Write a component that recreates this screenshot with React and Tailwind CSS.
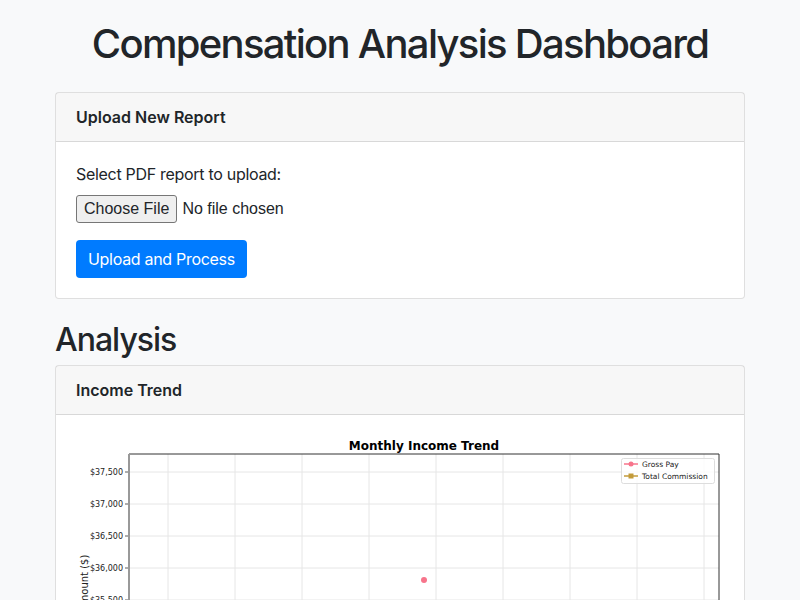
export default function App() {
  const yTicks = [
    { y: 37, label: "$37,500" },
    { y: 69, label: "$37,000" },
    { y: 101, label: "$36,500" },
    { y: 133, label: "$36,000" },
    { y: 165, label: "$35,500" },
    { y: 197, label: "$35,000" },
    { y: 229, label: "$34,500" },
    { y: 261, label: "$34,000" },
  ];
  const xGrid = [92, 159, 226, 293, 360, 427, 494, 561, 628];
  return (
    <div className="min-h-[600px] bg-[#f8f9fa] text-[#212529]" style={{ fontFamily: "Inter, 'Liberation Sans', sans-serif" }}>
      <div className="mx-auto w-[720px] px-[15px]">
        <h1 className="pt-5 mb-6 text-center text-[40px] leading-[48px] font-medium tracking-[-1.7px]">Compensation Analysis Dashboard</h1>

        <div className="bg-white border border-[rgba(0,0,0,0.125)] rounded-[4px] mb-6">
          <div className="bg-[rgba(0,0,0,0.03)] border-b border-[rgba(0,0,0,0.125)] px-5 py-3">
            <h5 className="text-[16px] leading-6 font-semibold">Upload New Report</h5>
          </div>
          <div className="p-5">
            <div className="text-[16px] leading-6 mb-2 tracking-[-0.3px]">Select PDF report to upload:</div>
            <div className="flex items-center h-[30px] mb-4">
              <span className="h-[28px] flex items-center px-[7px] bg-[#efefef] border border-[#767676] rounded-[3px] text-[16px]" style={{ fontFamily: "'Liberation Sans', Arial, sans-serif" }}>Choose File</span>
              <span className="ml-[5px] text-[16px]" style={{ fontFamily: "'Liberation Sans', Arial, sans-serif" }}>No file chosen</span>
            </div>
            <button className="bg-[#007bff] text-white text-[16px] leading-6 px-3 py-[7px] rounded-[4px] tracking-[-0.3px]">Upload and Process</button>
          </div>
        </div>

        <h2 className="text-[32px] leading-[38px] font-medium tracking-[-1px] -mt-[2px] mb-[6px]">Analysis</h2>

        <div className="bg-white border border-[rgba(0,0,0,0.125)] rounded-[4px]">
          <div className="bg-[rgba(0,0,0,0.03)] border-b border-[rgba(0,0,0,0.125)] px-5 py-3">
            <h5 className="text-[16px] leading-6 font-semibold">Income Trend</h5>
          </div>
          <div className="p-5">
            <svg width="650" height="310" viewBox="0 0 650 310" style={{ fontFamily: "'DejaVu Sans', sans-serif" }}>
              <text x="348" y="15" textAnchor="middle" fontSize="12" fontWeight="bold" fill="#000">Monthly Income Trend</text>
              {xGrid.map((x) => (
                <line key={x} x1={x} y1="19" x2={x} y2="272" stroke="#e6e6e6" strokeWidth="1" />
              ))}
              {yTicks.map((t) => (
                <g key={t.y}>
                  <line x1="53" y1={t.y} x2="643" y2={t.y} stroke="#e6e6e6" strokeWidth="1" />
                  <line x1="49" y1={t.y} x2="53" y2={t.y} stroke="#333" strokeWidth="0.8" />
                  <text x="47" y={t.y + 3} textAnchor="end" fontSize="8" fill="#222">{t.label}</text>
                </g>
              ))}
              <line x1="53" y1="19" x2="643" y2="19" stroke="#333" strokeWidth="1" />
              <line x1="643" y1="19" x2="643" y2="272" stroke="#333" strokeWidth="1" />
              <line x1="53" y1="272" x2="643" y2="272" stroke="#333" strokeWidth="1" />
              <line x1="53" y1="19" x2="53" y2="272" stroke="#999" strokeWidth="2" />
              <text transform="translate(12 148) rotate(-90)" textAnchor="middle" fontSize="10" fill="#222">Amount ($)</text>
              <circle cx="348" cy="145" r="3" fill="#f7748b" />
              <rect x="545.5" y="23.5" width="93" height="25" rx="2" fill="white" fillOpacity="0.8" stroke="#ddd" />
              <line x1="548" y1="29" x2="562" y2="29" stroke="#f7748b" strokeWidth="1.5" />
              <circle cx="555" cy="29" r="2.5" fill="#f7748b" />
              <text x="566" y="32" fontSize="7.5" fill="#222">Gross Pay</text>
              <line x1="548" y1="41" x2="562" y2="41" stroke="#c39b3b" strokeWidth="1.5" />
              <rect x="552.5" y="38.5" width="5" height="5" fill="#c39b3b" />
              <text x="566" y="44" fontSize="7.5" fill="#222">Total Commission</text>
            </svg>
          </div>
        </div>
      </div>
    </div>
  );
}
